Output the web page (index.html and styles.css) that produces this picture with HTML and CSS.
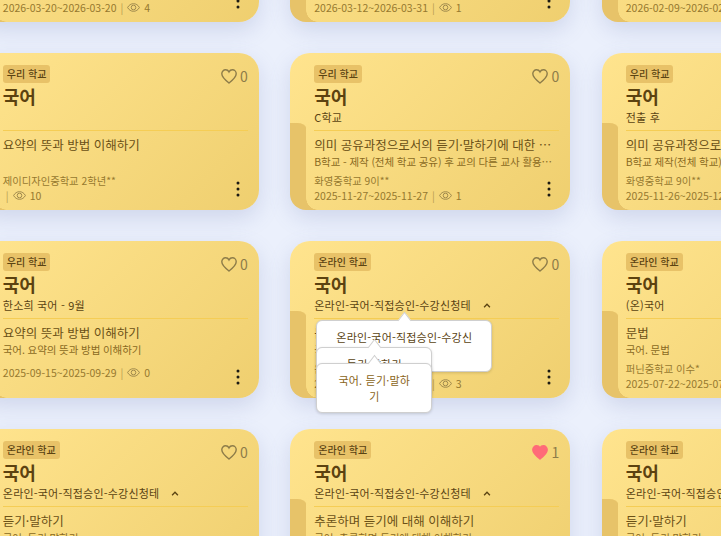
FILE: index.html
```html
<!DOCTYPE html>
<html lang="ko">
<head>
    <meta charset="UTF-8">
    <meta name="viewport" content="width=device-width, initial-scale=1.0">
    <title>수업 목록</title>
    <link rel="stylesheet" href="styles.css">
</head>
<body>
    <svg class="sprites" width="0" height="0">
        <symbol id="heart" viewBox="0 0 16 15"><path d="M8 14C3.500 10.500.8 8 .8 4.800.8 2.500 2.500.8 4.600.8 6 .8 7.300 1.600 8 2.900 8.700 1.600 10 .8 11.400.8c2.100 0 3.800 1.700 3.800 4C15.200 8 12.500 10.500 8 14z"/></symbol>
        <symbol id="eye" viewBox="0 0 13 9"><path d="M.6 4.500C2 2 4 .7 6.500.7s4.500 1.300 5.900 3.800C11 7 9 8.300 6.500 8.300S2 7 .6 4.500z" fill="none" stroke="currentColor"/><circle cx="6.500" cy="4.500" r="2.300" fill="none" stroke="currentColor"/></symbol>
        <symbol id="kebab" viewBox="0 0 4 16"><circle cx="2" cy="2" r="1.500"/><circle cx="2" cy="8" r="1.500"/><circle cx="2" cy="14" r="1.500"/></symbol>
        <symbol id="caret" viewBox="0 0 9 6"><path d="M1 5l3.500-3.500L8 5" fill="none" stroke="currentColor" stroke-width="1.600"/></symbol>
    </svg>

    <div class="grid">
        <!-- row 1 -->
        <div class="card">
            <div class="fold"></div>
            <div class="head"><span class="badge">우리 학교</span><span class="like"><svg class="heart"><use href="#heart"/></svg>0</span></div>
            <div class="title">국어</div>
            <div class="sub">C학교</div>
            <div class="desc">요약의 뜻과 방법 이해하기</div>
            <div class="desc2">국어. 요약의 뜻과 방법 이해하기</div>
            <div class="foot">
                <div class="meta"><div class="school">제이디자인중학교 2학년**</div><div class="date">2026-03-20~2026-03-20 <i>|</i> <svg class="eye"><use href="#eye"/></svg> 4</div></div>
                <svg class="kebab"><use href="#kebab"/></svg>
            </div>
        </div>
        <div class="card">
            <div class="fold"></div>
            <div class="head"><span class="badge">우리 학교</span><span class="like"><svg class="heart"><use href="#heart"/></svg>0</span></div>
            <div class="title">국어</div>
            <div class="sub">C학교</div>
            <div class="desc">요약의 뜻과 방법 이해하기</div>
            <div class="desc2">국어. 요약의 뜻과 방법 이해하기</div>
            <div class="foot">
                <div class="meta"><div class="school">화영중학교 9이**</div><div class="date">2026-03-12~2026-03-31 <i>|</i> <svg class="eye"><use href="#eye"/></svg> 1</div></div>
                <svg class="kebab"><use href="#kebab"/></svg>
            </div>
        </div>
        <div class="card">
            <div class="fold"></div>
            <div class="head"><span class="badge">우리 학교</span><span class="like"><svg class="heart"><use href="#heart"/></svg>0</span></div>
            <div class="title">국어</div>
            <div class="sub">전출 후</div>
            <div class="desc">요약의 뜻과 방법 이해하기</div>
            <div class="desc2">국어. 요약의 뜻과 방법 이해하기</div>
            <div class="foot">
                <div class="meta"><div class="school">화영중학교 9이**</div><div class="date">2026-02-09~2026-02-28 <i>|</i> <svg class="eye"><use href="#eye"/></svg> 1</div></div>
                <svg class="kebab"><use href="#kebab"/></svg>
            </div>
        </div>

        <!-- row 2 -->
        <div class="card">
            <div class="fold"></div>
            <div class="head"><span class="badge">우리 학교</span><span class="like"><svg class="heart"><use href="#heart"/></svg>0</span></div>
            <div class="title">국어</div>
            <div class="sub"></div>
            <div class="desc">요약의 뜻과 방법 이해하기</div>
            <div class="desc2"></div>
            <div class="foot">
                <div class="meta"><div class="school">제이디자인중학교 2학년**</div><div class="date date-empty"><i>|</i> <svg class="eye"><use href="#eye"/></svg> 10</div></div>
                <svg class="kebab"><use href="#kebab"/></svg>
            </div>
        </div>
        <div class="card">
            <div class="fold"></div>
            <div class="head"><span class="badge">우리 학교</span><span class="like"><svg class="heart"><use href="#heart"/></svg>0</span></div>
            <div class="title">국어</div>
            <div class="sub">C학교</div>
            <div class="desc">의미 공유과정으로서의 듣기·말하기에 대한 이해와 실천하기</div>
            <div class="desc2">B학교 - 제작 (전체 학교 공유) 후 교의 다른 교사 활용 (공유 가능)</div>
            <div class="foot">
                <div class="meta"><div class="school">화영중학교 9이**</div><div class="date">2025-11-27~2025-11-27 <i>|</i> <svg class="eye"><use href="#eye"/></svg> 1</div></div>
                <svg class="kebab"><use href="#kebab"/></svg>
            </div>
        </div>
        <div class="card">
            <div class="fold"></div>
            <div class="head"><span class="badge">우리 학교</span><span class="like"><svg class="heart"><use href="#heart"/></svg>0</span></div>
            <div class="title">국어</div>
            <div class="sub">전출 후</div>
            <div class="desc">의미 공유과정으로서의 듣기·말하기에 대한 이해와 실천하기</div>
            <div class="desc2">B학교 제작(전체 학교) 후 교의 다른 교사 활용</div>
            <div class="foot">
                <div class="meta"><div class="school">화영중학교 9이**</div><div class="date">2025-11-26~2025-12-26 <i>|</i> <svg class="eye"><use href="#eye"/></svg> 1</div></div>
                <svg class="kebab"><use href="#kebab"/></svg>
            </div>
        </div>

        <!-- row 3 -->
        <div class="card">
            <div class="fold"></div>
            <div class="head"><span class="badge">우리 학교</span><span class="like"><svg class="heart"><use href="#heart"/></svg>0</span></div>
            <div class="title">국어</div>
            <div class="sub">한소희 국어 - 9월</div>
            <div class="desc">요약의 뜻과 방법 이해하기</div>
            <div class="desc2">국어. 요약의 뜻과 방법 이해하기</div>
            <div class="foot">
                <div class="meta"><div class="date">2025-09-15~2025-09-29 <i>|</i> <svg class="eye"><use href="#eye"/></svg> 0</div></div>
                <svg class="kebab"><use href="#kebab"/></svg>
            </div>
        </div>
        <div class="card">
            <div class="fold"></div>
            <div class="head"><span class="badge">온라인 학교</span><span class="like"><svg class="heart"><use href="#heart"/></svg>0</span></div>
            <div class="title">국어</div>
            <div class="sub">온라인-국어-직접승인-수강신청테 <svg class="caret"><use href="#caret"/></svg></div>
            <div class="desc">듣기·말하기</div>
            <div class="desc2">국어. 듣기·말하기</div>
            <div class="foot">
                <div class="meta"><div class="school">온라인중학교 1이**</div><div class="date">2025-07-22~2025-07-31 <i>|</i> <svg class="eye"><use href="#eye"/></svg> 3</div></div>
                <svg class="kebab"><use href="#kebab"/></svg>
            </div>
            <div class="tip tip-sub">온라인-국어-직접승인-수강신</div>
            <div class="tip tip-desc">듣기·말하기</div>
            <div class="tip tip-desc2">국어. 듣기·말하<br>기</div>
        </div>
        <div class="card">
            <div class="fold"></div>
            <div class="head"><span class="badge">온라인 학교</span><span class="like"><svg class="heart"><use href="#heart"/></svg>0</span></div>
            <div class="title">국어</div>
            <div class="sub">(온)국어</div>
            <div class="desc">문법</div>
            <div class="desc2">국어. 문법</div>
            <div class="foot">
                <div class="meta"><div class="school">퍼닌중학교 이수*</div><div class="date">2025-07-22~2025-07-31 <i>|</i> <svg class="eye"><use href="#eye"/></svg> 1</div></div>
                <svg class="kebab"><use href="#kebab"/></svg>
            </div>
        </div>

        <!-- row 4 -->
        <div class="card">
            <div class="fold"></div>
            <div class="head"><span class="badge">온라인 학교</span><span class="like"><svg class="heart"><use href="#heart"/></svg>0</span></div>
            <div class="title">국어</div>
            <div class="sub">온라인-국어-직접승인-수강신청테 <svg class="caret"><use href="#caret"/></svg></div>
            <div class="desc">듣기·말하기</div>
            <div class="desc2">국어. 듣기·말하기</div>
        </div>
        <div class="card">
            <div class="fold"></div>
            <div class="head"><span class="badge">온라인 학교</span><span class="like"><svg class="heart liked"><use href="#heart"/></svg>1</span></div>
            <div class="title">국어</div>
            <div class="sub">온라인-국어-직접승인-수강신청테 <svg class="caret"><use href="#caret"/></svg></div>
            <div class="desc">추론하며 듣기에 대해 이해하기</div>
            <div class="desc2">국어. 추론하며 듣기에 대해 이해하기</div>
        </div>
        <div class="card">
            <div class="fold"></div>
            <div class="head"><span class="badge">온라인 학교</span><span class="like"><svg class="heart"><use href="#heart"/></svg>0</span></div>
            <div class="title">국어</div>
            <div class="sub">온라인-국어-직접승인-수강신청테 <svg class="caret"><use href="#caret"/></svg></div>
            <div class="desc">듣기·말하기</div>
            <div class="desc2">국어. 듣기·말하기</div>
        </div>
    </div>
</body>
</html>
```

FILE: styles.css
```css
html, body {
    height: 100%;
    overflow: hidden;
}

body {
    margin: 0;
    background: #ebf0fc;
    font-family: "Noto Sans CJK KR", "Noto Sans", sans-serif;
    color: #5a4312;
}

.sprites {
    position: absolute;
}

.grid {
    display: grid;
    grid-template-columns: repeat(3, 279.9px);
    grid-auto-rows: 157px;
    gap: 31px 31.6px;
    margin: -135px 0 0 -21.2px;
}

.card {
    position: relative;
    display: flex;
    flex-direction: column;
    padding: 12px 11px 0 24px;
    border-radius: 20px;
    background: linear-gradient(135deg, #ffe48e 0%, #efcf6f 100%);
    box-shadow: 0 8px 22px rgba(96, 110, 170, 0.2);
}

.fold {
    position: absolute;
    left: 0;
    top: 70px;
    bottom: 0;
    width: 16px;
    background: #e7c369;
    border-radius: 0 11px 0 20px / 0 6px 0 20px;
}

.fold::after {
    content: "";
    position: absolute;
    left: 16px;
    bottom: 0;
    width: 12px;
    height: 12px;
    background: radial-gradient(circle at 100% 0, transparent 11.5px, #e7c369 12px);
}

.head {
    display: flex;
    justify-content: space-between;
    height: 18px;
}

.badge {
    padding: 0 4px;
    border-radius: 3px;
    background: #e8c268;
    font-size: 10px;
    font-weight: 500;
    line-height: 18px;
}

.like {
    display: flex;
    align-items: center;
    gap: 3px;
    height: 18px;
    margin-top: 2px;
    font-size: 14px;
    color: #8d7c49;
}

.heart {
    width: 16px;
    height: 15px;
    fill: none;
    stroke: #8d7c49;
    stroke-width: 1.4;
}

.heart.liked {
    fill: #ff6b78;
    stroke: #ff6b78;
}

.title {
    height: 25px;
    margin-top: 1px;
    font-size: 18px;
    font-weight: 700;
    line-height: 25px;
    color: #5c4210;
}

.sub {
    display: flex;
    align-items: center;
    gap: 12px;
    height: 17px;
    padding-bottom: 4px;
    font-size: 11px;
    line-height: 17px;
    letter-spacing: 0.2px;
    white-space: nowrap;
}

.caret {
    width: 8px;
    height: 5px;
    color: #5a4312;
}

.desc {
    height: 28px;
    border-top: 1px solid #f5cd55;
    font-size: 12.500px;
    line-height: 28px;
    color: #6a5016;
    overflow: hidden;
    white-space: nowrap;
    text-overflow: ellipsis;
}

.desc2 {
    height: 14px;
    margin: -4px 0 6px;
    padding-right: 5px;
    font-size: 10.500px;
    line-height: 14px;
    letter-spacing: -0.1px;
    color: #8a6a22;
    overflow: hidden;
    white-space: nowrap;
    text-overflow: ellipsis;
}

.foot {
    display: flex;
    justify-content: space-between;
}

.meta {
    flex: 1;
    min-width: 0;
    color: #96792f;
    white-space: nowrap;
}

.school {
    font-size: 10.300px;
    line-height: 11px;
}

.date {
    display: flex;
    align-items: center;
    gap: 4px;
    height: 16px;
    margin-top: 1px;
    font-size: 10.500px;
}

.date-empty {
    padding-left: 3px;
}

.date i {
    font-style: normal;
    color: #b89c50;
}

.eye {
    width: 13px;
    height: 9px;
    color: #a08a4e;
}

.kebab {
    flex: none;
    width: 4px;
    height: 16px;
    margin: 6px 8px 0 0;
    fill: #1c1a14;
}

/* tooltips lying over the card */
.tip {
    position: absolute;
    left: 26px;
    box-sizing: border-box;
    padding: 8px 16px;
    border: 1px solid #cfcfcf;
    border-radius: 6px;
    background: #fff;
    box-shadow: 0 1px 3px rgba(0, 0, 0, 0.15);
    font-size: 11px;
    line-height: 16px;
    letter-spacing: 0.2px;
    text-align: center;
}

.tip::before {
    content: "";
    position: absolute;
    left: 50%;
    top: -6px;
    width: 10px;
    height: 10px;
    margin-left: -5px;
    border-top: 1px solid #cfcfcf;
    border-left: 1px solid #cfcfcf;
    background: #fff;
    transform: rotate(45deg) skew(8deg, 8deg);
}

.tip-sub {
    top: 79px;
    width: 176px;
    height: 52px;
}

.tip-desc {
    top: 106px;
    width: 116px;
    height: 50px;
}

.tip-desc2 {
    top: 122px;
    width: 116px;
    height: 50px;
    color: #8a6420;
}
```
